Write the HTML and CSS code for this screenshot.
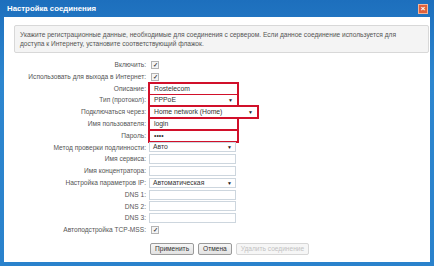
FILE: index.html
```html
<!DOCTYPE html>
<html lang="ru">
<head>
    <meta charset="UTF-8">
    <title>Настройка соединения</title>
    <link rel="stylesheet" href="styles.css">
</head>
<body>
    <div class="window">
        <div class="titlebar">
            <span class="title">Настройка соединения</span>
            <span class="close">&#215;</span>
        </div>
        <div class="content">
            <div class="info">
                Укажите регистрационные данные, необходимые для соединения с сервером. Если данное соединение используется для<br>
                доступа к Интернету, установите соответствующий флажок.
            </div>
            <div class="form">
                <label>Включить:</label>
                <div class="field"><span class="check">&#10003;</span></div>

                <label>Использовать для выхода в Интернет:</label>
                <div class="field"><span class="check">&#10003;</span></div>

                <label>Описание:</label>
                <div class="field"><div class="mark"><span class="input">Rostelecom</span></div></div>

                <label>Тип (протокол):</label>
                <div class="field"><div class="mark"><span class="input select">PPPoE</span></div></div>

                <label>Подключаться через:</label>
                <div class="field"><div class="mark"><span class="input select wide">Home network (Home)</span></div></div>

                <label>Имя пользователя:</label>
                <div class="field"><div class="mark"><span class="input">login</span></div></div>

                <label>Пароль:</label>
                <div class="field"><div class="mark"><span class="input">&#8226;&#8226;&#8226;&#8226;</span></div></div>

                <label>Метод проверки подлинности:</label>
                <div class="field"><span class="input select">Авто</span></div>

                <label>Имя сервиса:</label>
                <div class="field"><span class="input"></span></div>

                <label>Имя концентратора:</label>
                <div class="field"><span class="input"></span></div>

                <label>Настройка параметров IP:</label>
                <div class="field"><span class="input select">Автоматическая</span></div>

                <label>DNS 1:</label>
                <div class="field"><span class="input"></span></div>

                <label>DNS 2:</label>
                <div class="field"><span class="input"></span></div>

                <label>DNS 3:</label>
                <div class="field"><span class="input"></span></div>

                <label>Автоподстройка TCP-MSS:</label>
                <div class="field"><span class="check">&#10003;</span></div>
            </div>
            <div class="buttons">
                <button>Применить</button>
                <button>Отмена</button>
                <button disabled>Удалить соединение</button>
            </div>
        </div>
    </div>
</body>
</html>
```

FILE: styles.css
```css
body {
    margin: 0;
    padding: 0;
    font-family: "Liberation Sans", Arial, sans-serif;
}

.window {
    width: 434px;
    height: 266px;
    box-sizing: border-box;
    padding: 0 4px 4px 4px;
    background: linear-gradient(#1d6fbd, #2d86cf 30%, #2a82cc);
    display: flex;
    flex-direction: column;
}

.titlebar {
    height: 17px;
    display: flex;
    align-items: center;
    justify-content: space-between;
    padding: 0 0 0 3px;
}

.title {
    color: #fff;
    font-weight: bold;
    font-size: 7.8px;
}

.close {
    width: 8px;
    height: 8px;
    margin-right: 2px;
    background: #e0603a;
    border: 1px solid #f3b59b;
    color: #fff;
    font-size: 8px;
    font-weight: bold;
    line-height: 8px;
    text-align: center;
}

.content {
    flex: 1;
    background: #fff;
    padding-top: 8px;
    display: flex;
    flex-direction: column;
}

.info {
    margin: 0 1px 0 10px;
    padding: 4px 0 0 5px;
    box-sizing: border-box;
    height: 28px;
    background: #f4f4f4;
    border: 1px solid #d8d8d8;
    border-radius: 2px;
    color: #555;
    font-size: 6.6px;
    line-height: 9px;
    white-space: nowrap;
}

.form {
    margin-top: 6px;
    display: grid;
    grid-template-columns: 142px 1fr;
    grid-auto-rows: 11.8px;
    column-gap: 3px;
}

label {
    text-align: right;
    font-size: 6.6px;
    color: #555;
    line-height: 11.8px;
    white-space: nowrap;
}

.field {
    display: flex;
    align-items: center;
}

.check {
    width: 6px;
    height: 6px;
    margin-left: 2px;
    border: 1px solid #b4b4b4;
    background: #f4f4f4;
    color: #444;
    font-size: 6px;
    font-weight: bold;
    line-height: 6px;
    text-align: center;
}

.mark {
    border: 2px solid #d1102a;
    margin-left: -1px;
}

.input {
    box-sizing: border-box;
    display: block;
    width: 87px;
    height: 10px;
    border: 1px solid #cdd6de;
    background: #fff;
    font-size: 6.8px;
    line-height: 8px;
    padding-left: 3px;
    color: #333;
    position: relative;
}

.mark .input {
    border-color: #fff;
}

.select::after {
    content: "\25BC";
    position: absolute;
    right: 3px;
    top: 0;
    font-size: 5px;
    color: #222;
}

.wide {
    width: 107px;
}

.buttons {
    margin: 7px 0 0 146px;
    display: flex;
    gap: 4px;
}

button {
    font-family: "Liberation Sans", Arial, sans-serif;
    font-size: 6.6px;
    height: 12px;
    padding: 0 4px;
    background: linear-gradient(#f6f6f6, #e2e2e2);
    border: 1px solid #9a9a9a;
    border-radius: 2px;
    color: #333;
    line-height: 10px;
}

button:disabled {
    color: #c2c2c2;
    border-color: #d6d6d6;
    background: #f6f6f6;
}
```
